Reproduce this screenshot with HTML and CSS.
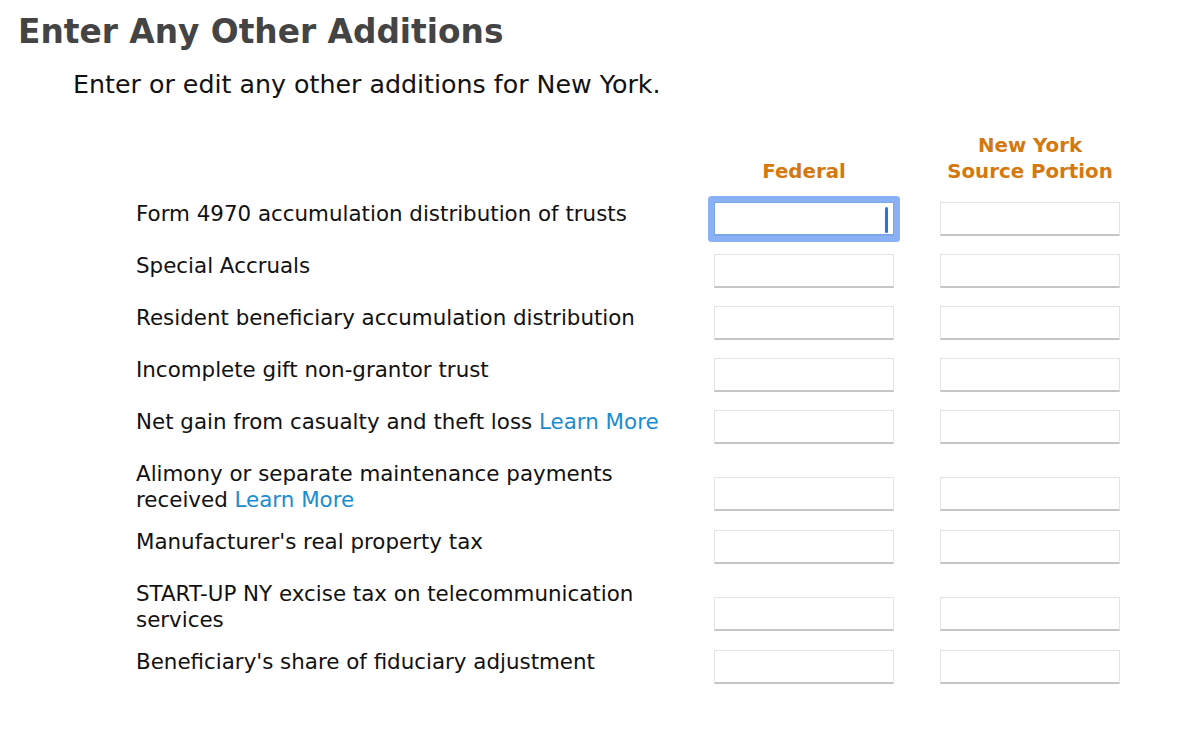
FILE: index.html
```html
<!DOCTYPE html>
<html lang="en">
<head>
<meta charset="utf-8">
<title>Enter Any Other Additions</title>
<link rel="stylesheet" href="styles.css">
</head>
<body>
<main class="page">
  <h1 class="title">Enter Any Other Additions</h1>
  <p class="subtitle">Enter or edit any other additions for New York.</p>

  <section class="form">
    <div class="head">
      <div class="head-label"></div>
      <div class="col-head">Federal</div>
      <div class="col-head">New York<br>Source Portion</div>
    </div>

    <div class="row">
      <div class="label">Form 4970 accumulation distribution of trusts</div>
      <div class="field field--focus"><span class="caret"></span></div>
      <div class="field"></div>
    </div>
    <div class="row">
      <div class="label">Special Accruals</div>
      <div class="field"></div>
      <div class="field"></div>
    </div>
    <div class="row">
      <div class="label">Resident beneficiary accumulation distribution</div>
      <div class="field"></div>
      <div class="field"></div>
    </div>
    <div class="row">
      <div class="label">Incomplete gift non-grantor trust</div>
      <div class="field"></div>
      <div class="field"></div>
    </div>
    <div class="row">
      <div class="label">Net gain from casualty and theft loss <a class="link" href="#">Learn More</a></div>
      <div class="field"></div>
      <div class="field"></div>
    </div>
    <div class="row row--two">
      <div class="label">Alimony or separate maintenance payments<br>received <a class="link" href="#">Learn More</a></div>
      <div class="field"></div>
      <div class="field"></div>
    </div>
    <div class="row">
      <div class="label">Manufacturer's real property tax</div>
      <div class="field"></div>
      <div class="field"></div>
    </div>
    <div class="row row--two">
      <div class="label">START-UP NY excise tax on telecommunication<br>services</div>
      <div class="field"></div>
      <div class="field"></div>
    </div>
    <div class="row">
      <div class="label">Beneficiary's share of fiduciary adjustment</div>
      <div class="field"></div>
      <div class="field"></div>
    </div>
  </section>
</main>
</body>
</html>
```

FILE: styles.css
```css
html, body {
  margin: 0;
  padding: 0;
  background: #ffffff;
}

body {
  font-family: "DejaVu Sans", "Liberation Sans", sans-serif;
  color: #111111;
}

.page {
  padding: 12px 0 0 18px;
}

.title {
  margin: 0;
  font-size: 32.8px;
  line-height: 40px;
  font-weight: bold;
  color: #444444;
}

.subtitle {
  margin: 18px 0 0 55px;
  font-size: 25.3px;
  line-height: 30px;
  color: #111111;
}

.form {
  margin: 33px 0 0 118px;
}

.head,
.row {
  display: grid;
  grid-template-columns: 532px 180px 180px;
  column-gap: 46px;
}

.head {
  height: 52px;
  margin-bottom: 16px;
  align-items: end;
}

.col-head {
  text-align: center;
  font-size: 19.8px;
  line-height: 26px;
  font-weight: bold;
  color: #d4790f;
}

.row {
  height: 52px;
  align-items: start;
}

.row--two {
  height: 68px;
}

.label {
  font-size: 21.4px;
  line-height: 26px;
  color: #111111;
  white-space: nowrap;
}

.link {
  color: #1a8ccf;
  text-decoration: none;
}

.field {
  position: relative;
  box-sizing: border-box;
  height: 34px;
  margin-top: 1px;
  background: #ffffff;
  border: 1px solid #e3e3e3;
  border-bottom: 2px solid #c6c6c6;
  border-radius: 1px;
}

.row--two .field {
  margin-top: 16px;
}

.field--focus {
  border-color: #7aa6ea;
  box-shadow: 0 0 0 6px #8ab0f5;
  border-radius: 1px;
}

.caret {
  position: absolute;
  right: 5px;
  top: 4px;
  width: 3px;
  height: 26px;
  border-radius: 2px;
  background: #1777f7;
}
```
